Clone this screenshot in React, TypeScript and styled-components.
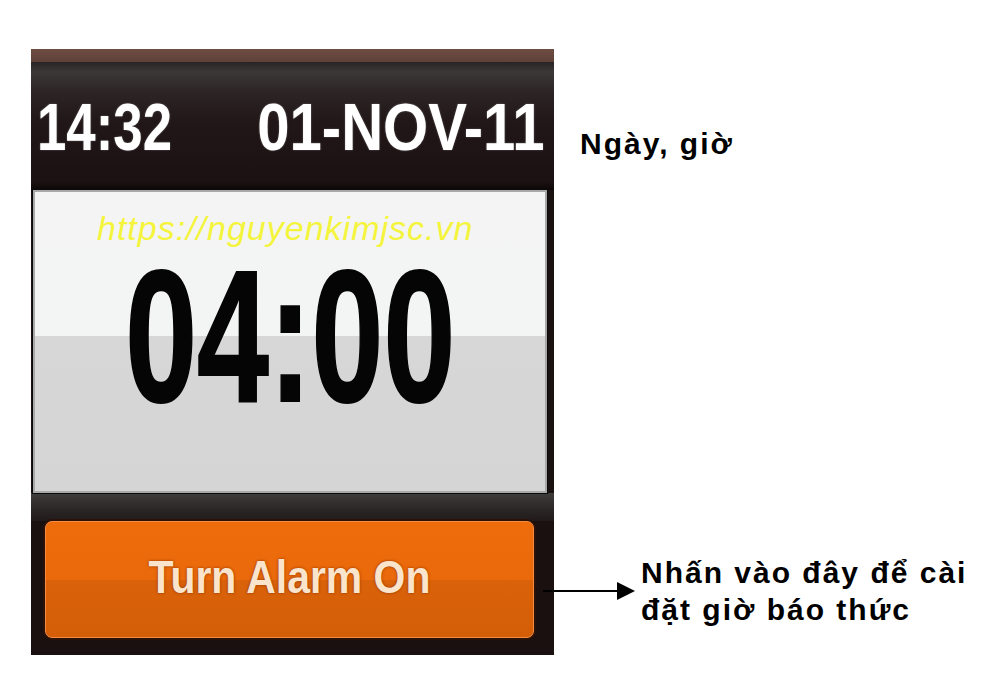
import styled, { createGlobalStyle } from 'styled-components';

const GlobalStyle = createGlobalStyle`
  html, body {
    margin: 0;
    padding: 0;
    background: #ffffff;
  }
  body {
    font-family: 'Liberation Sans', Arial, sans-serif;
  }
`;

const Page = styled.div`
  display: flex;
  align-items: flex-start;
  width: 1000px;
  height: 679px;
  padding: 49px 0 0 31px;
  box-sizing: border-box;
`;

const Device = styled.div`
  display: flex;
  flex-direction: column;
  width: 523px;
  height: 606px;
  background: #1a1111;
`;

const TopStrip = styled.div`
  height: 13px;
  background: linear-gradient(to bottom, #6e4c42, #5f4138);
`;

const Header = styled.div`
  display: flex;
  justify-content: space-between;
  align-items: flex-start;
  height: 128px;
  box-sizing: border-box;
  padding: 32px 9px 0 6px;
  background: linear-gradient(
    to bottom,
    #2a2424 0px,
    #3c3838 10px,
    #2c2425 30px,
    #211718 60px,
    #1b1112 120px,
    #0c0707 128px
  );
`;

// the device font is a condensed one, so Arial Bold is squeezed to fit
const StatusText = styled.span<{ $scale: number; $origin: string }>`
  display: inline-block;
  font-family: 'Liberation Sans', Arial, sans-serif;
  font-weight: 700;
  font-size: 66px;
  line-height: 1;
  color: #ffffff;
  white-space: nowrap;
  transform: scaleX(${(p) => p.$scale});
  transform-origin: ${(p) => p.$origin} center;
  text-shadow: 0 0 2px rgba(255, 255, 255, 0.35);
`;

const Screen = styled.div`
  position: relative;
  display: flex;
  justify-content: center;
  height: 303px;
  margin: 0 7px 0 2px;
  box-sizing: border-box;
  border: 2px solid #a8a8a8;
  box-shadow: 0 0 0 1px #0a0a0a;
  background: linear-gradient(
    to bottom,
    #f4f4f4 0px,
    #f3f4f4 144px,
    #d7d7d7 144px,
    #d5d5d5 100%
  );
`;

const Watermark = styled.span`
  position: absolute;
  top: 19px;
  left: 62px;
  font-family: 'Liberation Sans', Arial, sans-serif;
  font-style: italic;
  font-weight: 400;
  font-size: 34px;
  line-height: 1;
  letter-spacing: 1px;
  color: #f4f43c;
  white-space: nowrap;
`;

const BigTime = styled.span`
  display: inline-block;
  margin-top: 70px;
  font-family: 'Liberation Sans', Arial, sans-serif;
  font-weight: 700;
  font-size: 187px;
  line-height: 0.8;
  color: #050505;
  white-space: nowrap;
  transform: scaleX(0.69);
  -webkit-text-stroke: 2px #050505;
`;

const Band = styled.div`
  height: 28px;
  background: linear-gradient(to bottom, #3e3c3c, #2b2626 60%, #211a1a);
`;

const ButtonWrap = styled.div`
  display: flex;
  padding: 0 20px 17px 14px;
  background: #1a1010;
`;

const AlarmButton = styled.button`
  flex: 1;
  height: 117px;
  display: flex;
  align-items: center;
  justify-content: center;
  padding: 0 0 6px;
  border: 1px solid #f58a40;
  border-radius: 7px;
  box-shadow: 0 0 0 2px #2b1208;
  background: linear-gradient(
    to bottom,
    #ee6c0c 0%,
    #ea690a 50%,
    #d9620a 50%,
    #d45e08 100%
  );
  cursor: pointer;
`;

const ButtonLabel = styled.span`
  display: inline-block;
  font-family: 'Liberation Sans', Arial, sans-serif;
  font-weight: 700;
  font-size: 46px;
  line-height: 1;
  color: #fbe4cc;
  white-space: nowrap;
  transform: scaleX(0.89);
  text-shadow: 0 0 3px #8a3000;
`;

const Notes = styled.div`
  display: flex;
  flex-direction: column;
  justify-content: space-between;
  height: 606px;
  box-sizing: border-box;
  padding: 77px 0 27px 26px;
`;

const NoteText = styled.div`
  font-family: 'Liberation Sans', Arial, sans-serif;
  font-weight: 700;
  font-size: 30px;
  line-height: 36px;
  letter-spacing: 2px;
  color: #000000;
`;

const Callout = styled.div`
  display: flex;
  align-items: flex-start;
  margin-left: -37px;
`;

const CalloutText = styled(NoteText)`
  line-height: 37px;
`;

const Arrow = styled.svg`
  flex: none;
  margin-top: 27px;
  margin-right: 3px;
`;

export default function App() {
  return (
    <>
      <GlobalStyle />
      <Page>
        <Device>
          <TopStrip />
          <Header>
            <StatusText $scale={0.8} $origin="left">
              14:32
            </StatusText>
            <StatusText $scale={0.88} $origin="right">
              01-NOV-11
            </StatusText>
          </Header>
          <Screen>
            <Watermark>https://nguyenkimjsc.vn</Watermark>
            <BigTime>04:00</BigTime>
          </Screen>
          <Band />
          <ButtonWrap>
            <AlarmButton>
              <ButtonLabel>Turn Alarm On</ButtonLabel>
            </AlarmButton>
          </ButtonWrap>
        </Device>
        <Notes>
          <NoteText>Ngày, giờ</NoteText>
          <Callout>
            <Arrow width="95" height="20" viewBox="0 0 95 20">
              <line x1="0" y1="10" x2="76" y2="10" stroke="#000" strokeWidth="2" />
              <polygon points="74,1 92,10 74,19" fill="#000" />
            </Arrow>
            <CalloutText>
              Nhấn vào đây để cài
              <br />
              đặt giờ báo thức
            </CalloutText>
          </Callout>
        </Notes>
      </Page>
    </>
  );
}
